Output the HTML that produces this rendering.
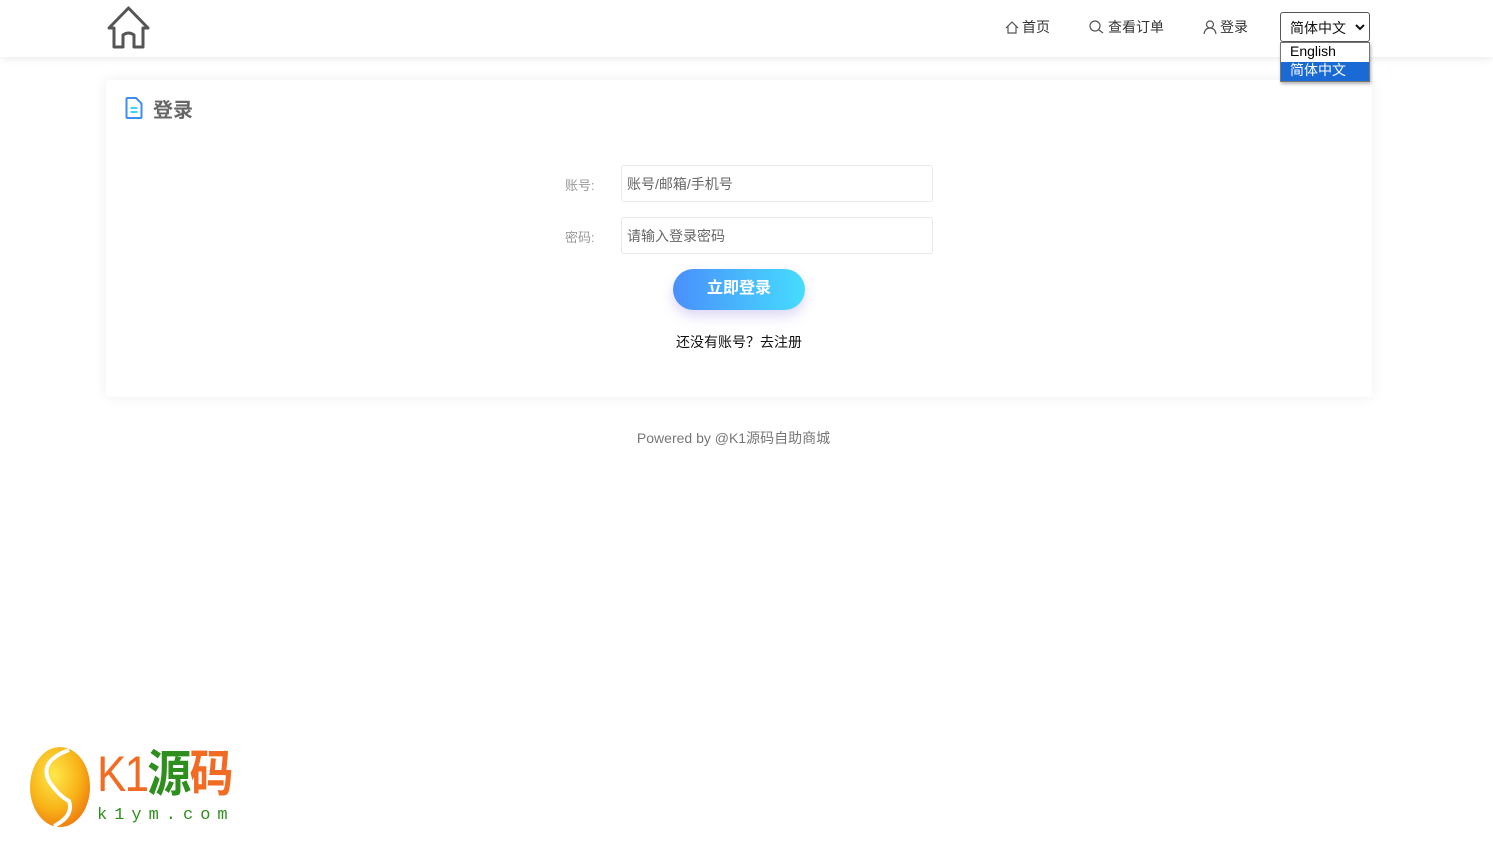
<!DOCTYPE html>
<html><head><meta charset="utf-8"><style>
*{margin:0;padding:0;box-sizing:border-box}
body{width:1493px;height:857px;background:#fff;font-family:"Liberation Sans","Noto Sans CJK SC",sans-serif;position:relative;overflow:hidden}
.hdr{position:absolute;left:0;top:0;width:1493px;height:57px;background:#fff;box-shadow:0 2px 8px rgba(0,0,0,.08)}
.nav{position:absolute;top:17px;font-size:14px;color:#333;display:flex;align-items:center;gap:3px}
.sel{position:absolute;left:1280px;top:12px;width:90px;height:30px;border:1px solid #555;border-radius:3px;font-size:14px;color:#111;padding:5px 9px;background:#fff;z-index:5}
.dd{position:absolute;left:1280px;top:42px;width:90px;height:40px;border:1px solid #777;background:#fff;font-size:14px;box-shadow:1px 2px 3px rgba(0,0,0,.3);z-index:5}
.dd div{height:19px;line-height:17px;padding-left:9px}
.card{position:absolute;left:106px;top:80px;width:1266px;height:317px;background:#fff;border-radius:4px;box-shadow:0 0 14px rgba(0,0,0,.07)}
.lbl{position:absolute;font-size:13px;color:#999}
.inp{position:absolute;left:621px;width:312px;height:37px;border:1px solid #e8e8e8;border-radius:3px;font-size:14px;color:#666;padding:8px 5px}
.btn{position:absolute;left:673px;top:269px;width:132px;height:41px;border-radius:21px;background:linear-gradient(90deg,#4a8ffc,#46dcfe);color:#fff;font-weight:bold;font-size:16px;text-align:center;line-height:40px;box-shadow:0 6px 12px rgba(120,100,220,.25)}
</style></head><body>
<div class="hdr">
<svg style="position:absolute;left:106px;top:5px" width="45" height="45" viewBox="0 0 45 45"><path d="M3 23 L22.5 3 L42 23 L37 23 L37 42 L28 42 L28 30 Q22.5 26 17 30 L17 42 L8 42 L8 23 Z" fill="none" stroke="#555" stroke-width="3" stroke-linejoin="round"/></svg>
<div class="nav" style="left:1005px"><svg width="14" height="13" viewBox="0 0 14 13"><path d="M1 7 L7 1 L13 7 M3 5.5 V12 H11 V5.5" fill="none" stroke="#555" stroke-width="1.2"/></svg>首页</div>
<div class="nav" style="left:1089px"><svg width="16" height="14" viewBox="0 0 16 14"><circle cx="6" cy="6" r="5" fill="none" stroke="#555" stroke-width="1.2"/><path d="M10 10 L14 13" stroke="#555" stroke-width="1.4"/></svg>查看订单</div>
<div class="nav" style="left:1203px"><svg width="14" height="14" viewBox="0 0 14 14"><circle cx="7" cy="4.5" r="3.5" fill="none" stroke="#555" stroke-width="1.2"/><path d="M1 14 Q2 8 7 8 Q12 8 13 14" fill="none" stroke="#555" stroke-width="1.2"/></svg>登录</div>
</div>
<div class="sel">简体中文<svg style="position:absolute;right:4px;top:11px" width="10" height="7" viewBox="0 0 10 7"><path d="M1 1 L5 5 L9 1" fill="none" stroke="#111" stroke-width="2"/></svg></div>
<div class="dd"><div>English</div><div style="background:#1a6ad6;color:#fff">简体中文</div></div>
<div class="card">
<svg style="position:absolute;left:19px;top:17px" width="18" height="22" viewBox="0 0 18 22"><path d="M1.5 2 Q1.5 1 2.5 1 H11 L16.5 6.5 V20 Q16.5 21 15.5 21 H2.5 Q1.5 21 1.5 20 Z" fill="none" stroke="#3c8ef5" stroke-width="2"/><path d="M5.5 11 H12.5 M5.5 15 H12.5" stroke="#3ed3f5" stroke-width="2"/></svg>
<div style="position:absolute;left:47px;top:14px;font-size:20px;font-weight:bold;color:#666">登录</div>
</div>
<div class="lbl" style="left:565px;top:175px">账号:</div>
<div class="inp" style="top:165px">账号/邮箱/手机号</div>
<div class="lbl" style="left:565px;top:227px">密码:</div>
<div class="inp" style="top:217px">请输入登录密码</div>
<div class="btn">立即登录</div>
<div style="position:absolute;left:676px;top:332px;font-size:14px;color:#111">还没有账号？去注册</div>
<div style="position:absolute;left:0;width:1467px;text-align:center;top:428px;font-size:14px;color:#777">Powered by @K1源码自助商城</div>
<svg style="position:absolute;left:29px;top:746px" width="62" height="82" viewBox="0 0 62 82"><defs><radialGradient id="g" cx="40%" cy="35%" r="70%"><stop offset="0" stop-color="#fde84a"/><stop offset=".6" stop-color="#f8b418"/><stop offset="1" stop-color="#ef7a10"/></radialGradient></defs><ellipse cx="31" cy="41" rx="30" ry="40" fill="url(#g)"/><path d="M40 4 Q10 15 20 35 Q30 50 40 55 Q45 70 25 80" fill="none" stroke="#fff" stroke-width="4"/></svg>
<div style="position:absolute;left:97px;top:744px;font-size:50px;line-height:60px;letter-spacing:-2px;transform:scaleX(0.88);transform-origin:0 0;white-space:nowrap"><span style="color:#f26b22">K1</span><span style="color:#2f8f1e;font-weight:bold">源</span><span style="color:#f26b22;font-weight:bold">码</span></div>
<div style="position:absolute;left:97px;top:806px;font-size:17px;color:#2f8f1e;letter-spacing:7px;font-family:'Liberation Mono',monospace">k1ym.com</div>
</body></html>
